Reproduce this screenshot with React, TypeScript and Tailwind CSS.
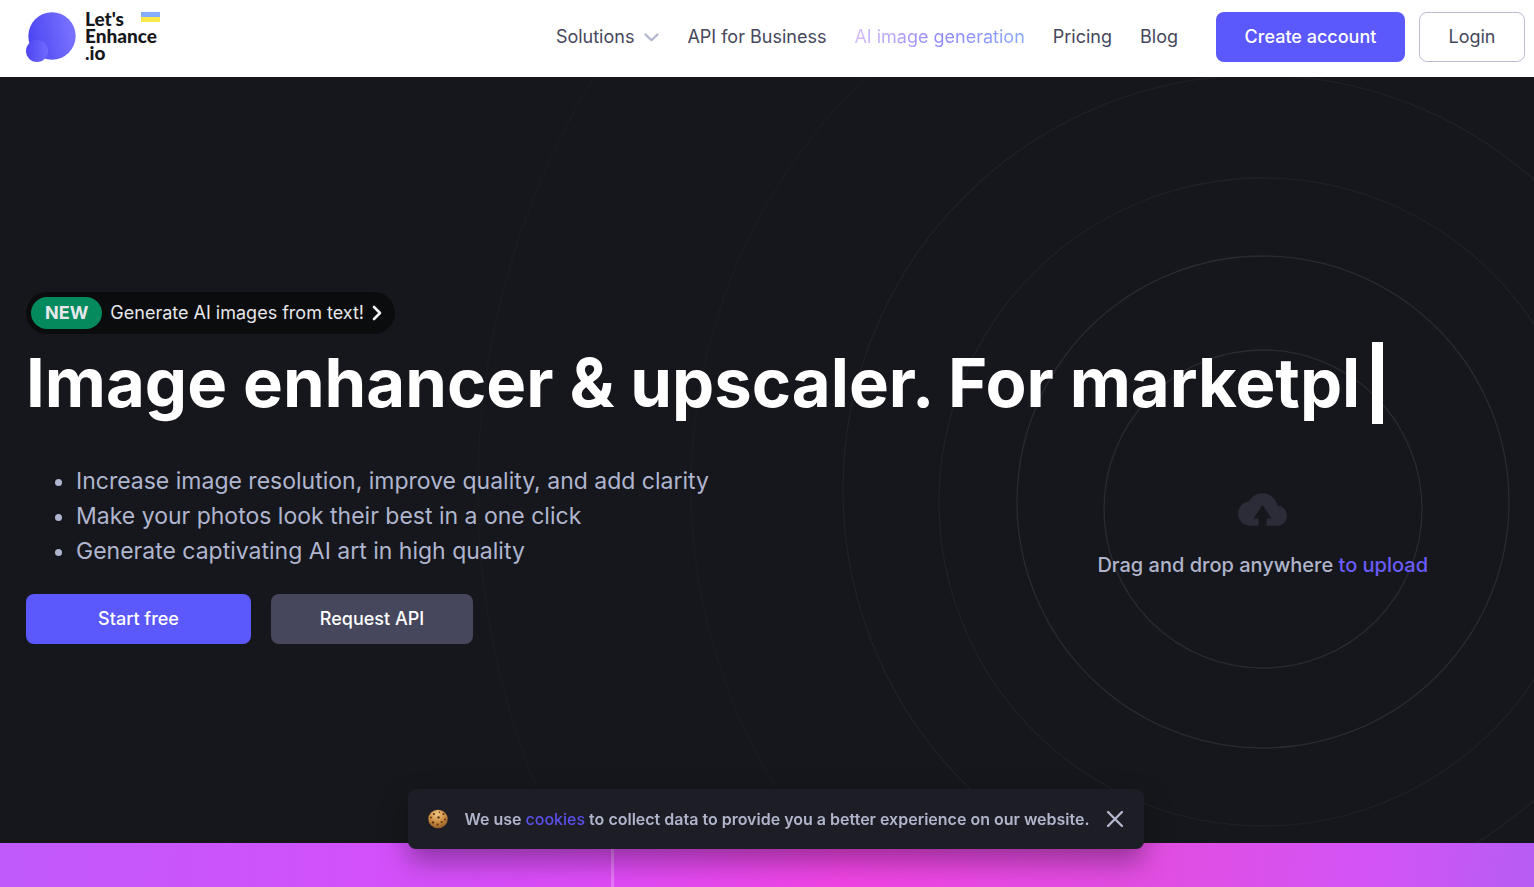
import React from "react";

// Decorative rings around the upload area, anchored to the right edge of the hero
const rings = [
  { cx: 1329, cy: 432, r: 159, color: "#2a2a34" },
  { cx: 1329, cy: 425, r: 246, color: "#2a2a34" },
  { cx: 1329, cy: 425, r: 324, color: "#202128" },
  { cx: 1324, cy: 413, r: 415, color: "#202127" },
  { cx: 1327, cy: 411, r: 570, color: "#1b1c21" },
  { cx: 1334, cy: 412, r: 790, color: "#1b1c21" },
];

const features = [
  "Increase image resolution, improve quality, and add clarity",
  "Make your photos look their best in a one click",
  "Generate captivating AI art in high quality",
];

function Logo() {
  return (
    <a href="#" className="relative flex h-[50px] items-start gap-[9px] text-[#16171c]">
      <svg width="50" height="50" viewBox="0 0 50 50" aria-hidden="true">
        <defs>
          <linearGradient id="logo-big" x1="0" y1="0.6" x2="1" y2="0.4">
            <stop offset="0" stopColor="#4c45f2" />
            <stop offset="1" stopColor="#7b74ff" />
          </linearGradient>
          <linearGradient id="logo-small" x1="0" y1="0.5" x2="1" y2="0.5">
            <stop offset="0" stopColor="#4c45f2" />
            <stop offset="1" stopColor="#716aff" />
          </linearGradient>
        </defs>
        <circle cx="26" cy="24" r="23.7" fill="url(#logo-big)" />
        <circle cx="11" cy="39" r="11" fill="url(#logo-small)" />
      </svg>
      <span className="-mt-0.5 flex w-[75px] flex-col font-['Lato',sans-serif] text-[19px] leading-[17px] font-black">
        <span>Let's</span>
        <span>Enhance</span>
        <span>.io</span>
      </span>
      <span className="absolute top-0 right-0 h-[10px] w-[19px] border-t-[5px] border-[#84aefb] bg-[#ffe94a]" />
    </a>
  );
}

function Header() {
  return (
    <header className="flex items-start justify-between bg-white pt-3 pr-[9px] pb-[15px] pl-[26px] text-lg text-[#46475c]">
      <Logo />
      <div className="flex items-center">
        <nav className="mr-[38px] flex items-center gap-7">
          <button type="button" className="flex items-center gap-2.5">
            Solutions
            <svg width="15" height="9" viewBox="0 0 15 9" fill="none" aria-hidden="true">
              <path d="M1.5 1.5l6 5.7 6-5.7" stroke="#b0b5cb" strokeWidth="2.2" strokeLinecap="round" strokeLinejoin="round" />
            </svg>
          </button>
          <a href="#">API for Business</a>
          <a href="#" className="bg-linear-to-r from-[#d6bcfa] via-[#8f88fb] to-[#86a8ff] bg-clip-text text-transparent">
            AI image generation
          </a>
          <a href="#">Pricing</a>
          <a href="#">Blog</a>
        </nav>
        <div className="flex gap-3.5">
          <button type="button" className="h-[50px] w-[189px] rounded-lg bg-[#5b58fc] font-medium text-white">
            Create account
          </button>
          <button type="button" className="h-[50px] w-[106px] rounded-lg border border-[#b9bdd0]">
            Login
          </button>
        </div>
      </div>
    </header>
  );
}

function Rings() {
  return (
    <svg className="pointer-events-none absolute top-0 right-0" width="1600" height="766" viewBox="0 0 1600 766" fill="none" aria-hidden="true">
      {rings.map((ring) => (
        <circle key={ring.r} cx={ring.cx} cy={ring.cy} r={ring.r} stroke={ring.color} strokeWidth="1.3" />
      ))}
    </svg>
  );
}

function Upload() {
  return (
    <div className="mt-[29px] mr-20 flex flex-col items-center">
      <svg width="49" height="33" viewBox="0 4 24 16" fill="#2c2c38" aria-hidden="true">
        <path d="M19.35 10.04C18.67 6.59 15.64 4 12 4 9.11 4 6.6 5.64 5.35 8.04 2.34 8.36 0 10.91 0 14c0 3.31 2.69 6 6 6h4v-3.6H7.6L12 9.8l4.4 6.6H14V20h5c2.76 0 5-2.24 5-5 0-2.64-2.05-4.78-4.65-4.96z" />
      </svg>
      <p className="mt-6 text-xl leading-[30px] font-medium text-[#b0b5cb]">
        Drag and drop anywhere{" "}
        <a href="#" className="text-[#6a5cff]">
          to upload
        </a>
      </p>
    </div>
  );
}

function Hero() {
  return (
    <main className="relative overflow-hidden bg-[#16171c] px-[26px] pt-[215px] pb-[199px]">
      <Rings />
      <div className="relative">
        <a href="#" className="inline-flex h-[42px] items-center rounded-full bg-[#0b0c0e] pr-3 pl-[5px] text-lg text-[#e6e7ea]">
          <span className="flex h-8 items-center rounded-full bg-[#048a5c] px-3.5 font-bold">NEW</span>
          <span className="ml-2">Generate AI images from text!</span>
          <svg className="ml-2" width="11" height="16" viewBox="0 0 11 16" fill="none" aria-hidden="true">
            <path d="M2 2l6 6-6 6" stroke="#f1f1f3" strokeWidth="2.6" strokeLinecap="round" strokeLinejoin="round" />
          </svg>
        </a>
        <h1 className="mt-2 flex flex-wrap items-center text-[67px] leading-[82px] font-bold text-white">
          Image enhancer &amp; upscaler. For marketpl
          <span className="ml-3 h-[82px] w-[11px] bg-white" />
        </h1>
        <div className="mt-10 flex items-start justify-between">
          <div>
            <ul className="list-disc pl-[50px] text-[23px] leading-[35px] text-[#b0b5cf]">
              {features.map((feature) => (
                <li key={feature}>{feature}</li>
              ))}
            </ul>
            <div className="mt-[25px] flex gap-5 text-lg font-medium text-white">
              <button type="button" className="h-[50px] w-[225px] rounded-lg bg-[#5b58fc]">
                Start free
              </button>
              <button type="button" className="h-[50px] w-[202px] rounded-lg bg-[#46475c]">
                Request API
              </button>
            </div>
          </div>
          <Upload />
        </div>
      </div>
    </main>
  );
}

function Cookie() {
  return (
    <svg width="20" height="20" viewBox="0 0 20 20" aria-hidden="true">
      <defs>
        <radialGradient id="cookie" cx="0.45" cy="0.25" r="0.8">
          <stop offset="0" stopColor="#efc584" />
          <stop offset="0.55" stopColor="#c98a3f" />
          <stop offset="1" stopColor="#8a5522" />
        </radialGradient>
      </defs>
      <ellipse cx="10" cy="10" rx="9.7" ry="9.3" fill="url(#cookie)" />
      <g fill="#5e3214">
        <circle cx="6" cy="5" r="1.1" />
        <circle cx="11.5" cy="3.3" r="0.7" />
        <circle cx="15.5" cy="5" r="1" />
        <circle cx="3" cy="8.6" r="1" />
        <circle cx="10.5" cy="8.4" r="1.2" />
        <circle cx="17" cy="10.5" r="1" />
        <circle cx="5" cy="13.4" r="1.2" />
        <circle cx="13.6" cy="13" r="1.1" />
        <circle cx="9.6" cy="15.6" r="1" />
      </g>
    </svg>
  );
}

function CookieBanner() {
  return (
    <div className="fixed inset-x-0 bottom-[38px] flex justify-center pl-[18px]">
      <div className="flex h-[60px] items-center gap-4 rounded-lg bg-[#1d1d26] px-5 text-base font-semibold text-[#b0b5cb] shadow-[0_12px_28px_rgba(0,0,0,0.35)]">
        <Cookie />
        <p>
          We use{" "}
          <a href="#" className="font-medium text-[#5b50e8]">
            cookies
          </a>{" "}
          to collect data to provide you a better experience on our website.
        </p>
        <button type="button" aria-label="Close">
          <svg width="18" height="18" viewBox="0 0 18 18" fill="none" aria-hidden="true">
            <path d="M2 2l14 14M16 2L2 16" stroke="#b4b8ce" strokeWidth="2.3" strokeLinecap="round" />
          </svg>
        </button>
      </div>
    </div>
  );
}

export default function App() {
  return (
    <div className="font-['Inter',sans-serif]">
      <Header />
      <Hero />
      {/* Top edge of the next section */}
      <section className="flex h-11 bg-[linear-gradient(95deg,#c05afb_0%,#cf52fa_20%,#dc4cf8_38%,#f044e4_55%,#e04ee2_76%,#d254f7_90%,#b65df2_100%)]">
        <div className="w-2/5 border-r-[3px] border-white/25" />
      </section>
      <CookieBanner />
    </div>
  );
}
